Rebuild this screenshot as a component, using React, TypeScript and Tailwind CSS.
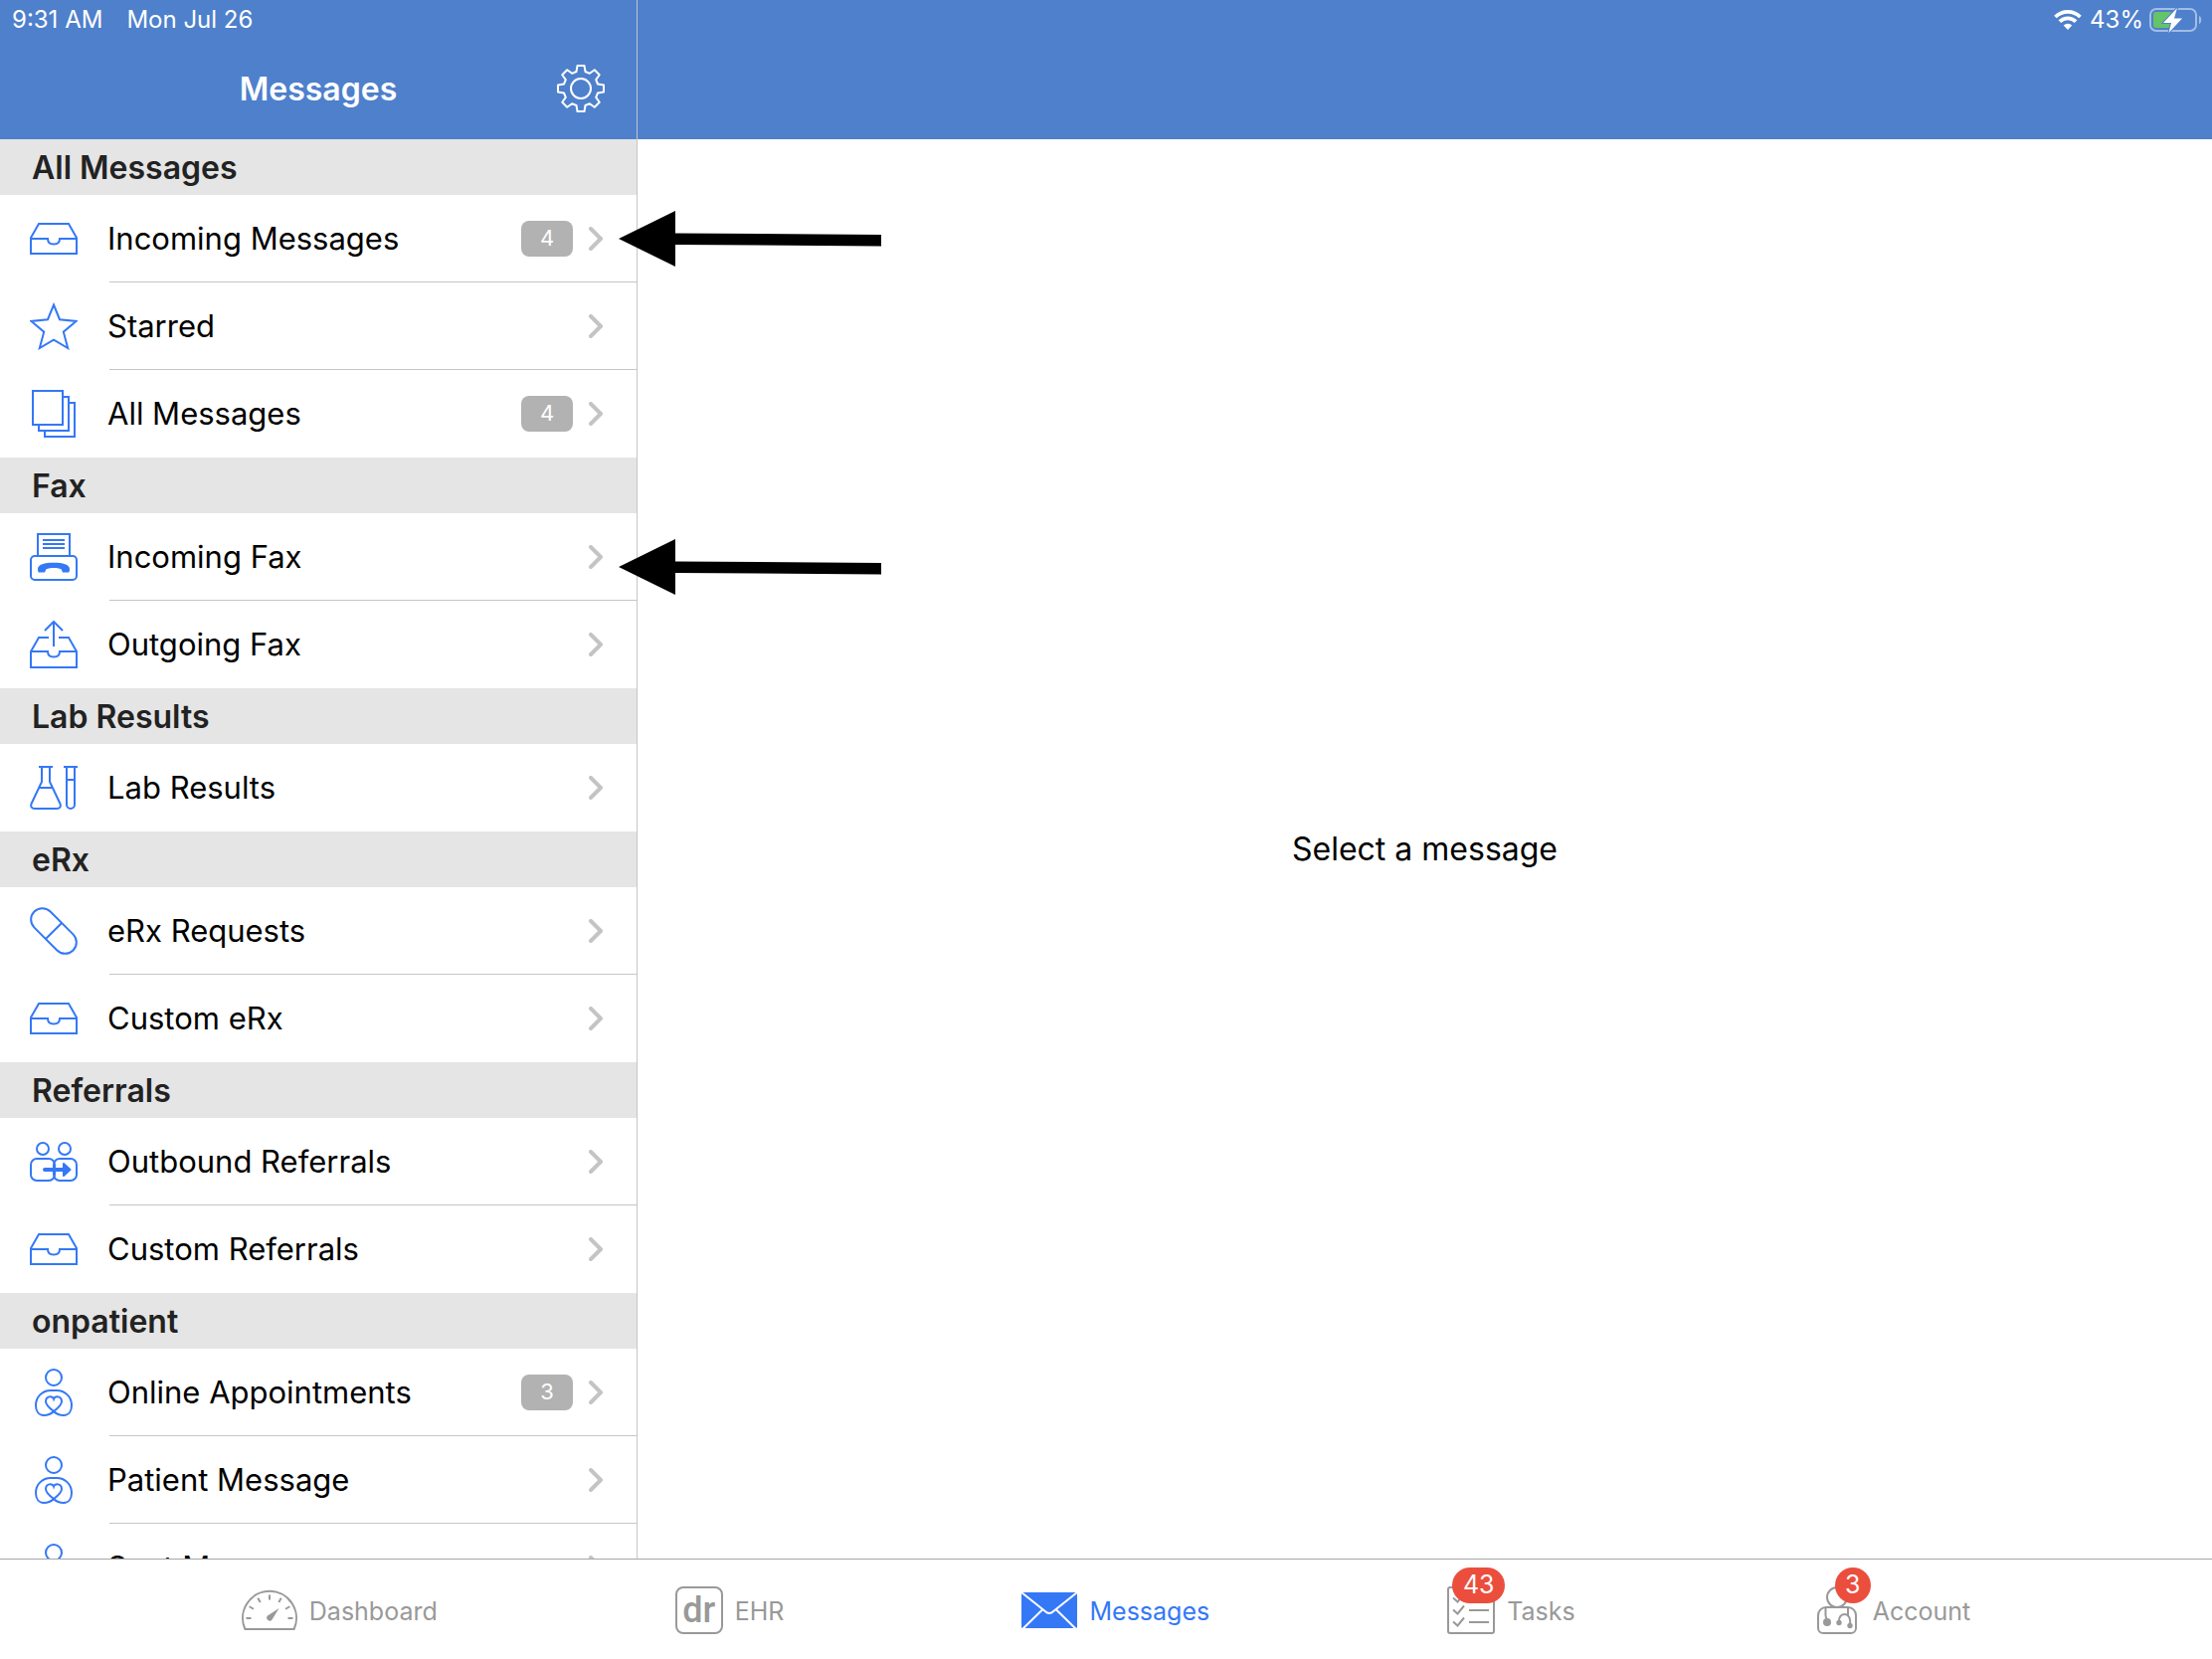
import React from "react";

type IconProps = { className?: string };

type Row = {
  label: string;
  icon: (props: IconProps) => React.ReactElement;
  count?: number;
};

type Section = { title: string; rows: Row[] };

const lineIcon = {
  viewBox: "0 0 48 48",
  fill: "none",
  stroke: "currentColor",
  strokeWidth: 2,
  "aria-hidden": true,
};

function InboxIcon({ className }: IconProps) {
  return (
    <svg {...lineIcon} className={className}>
      <path d="M9 9h30l8 14v16H1V23z" />
      <path d="M1 24h17c0 3.500 2.500 5.500 6 5.500s6-2 6-5.500h17" />
    </svg>
  );
}

function OutboxIcon({ className }: IconProps) {
  return (
    <svg {...lineIcon} className={className}>
      <path d="M19 17H9L1 31v16h46V31l-8-14H29" />
      <path d="M1 31h17c0 3.500 2.500 5.500 6 5.500s6-2 6-5.500h17" />
      <path d="M24 26V1M15 10l9-9 9 9" />
    </svg>
  );
}

function StarIcon({ className }: IconProps) {
  return (
    <svg {...lineIcon} className={className}>
      <path d="M24 2.500l6 14.700 16.500 1.700-12.700 10.800 4.400 16.300L24 37.700 9.800 46l4.400-16.300L1.500 18.900 18 17.200z" />
    </svg>
  );
}

function StackIcon({ className }: IconProps) {
  return (
    <svg {...lineIcon} className={className}>
      <path d="M3 1h30v34H3zM33 7h6v34H9v-6M39 13h6v34H15v-6" />
    </svg>
  );
}

function FaxIcon({ className }: IconProps) {
  return (
    <svg {...lineIcon} className={className}>
      <rect x="1" y="23" width="46" height="24" rx="4" />
      <path d="M8 23V1h32v22M13 7h22M13 11h22M13 15h22" />
      <path
        d="M8 36c0-4.500 7-6.300 16-6.300s16 1.800 16 6.300c0 1.500-.3 3-.8 3.500h-6.200l-1.400-3.300c-4.500-1.600-10.700-1.600-15.200 0L15 39.500H8.800C8.300 39 8 37.500 8 36z"
        fill="currentColor"
        stroke="none"
      />
    </svg>
  );
}

function LabIcon({ className }: IconProps) {
  return (
    <svg {...lineIcon} className={className}>
      <path d="M9 3h14M12 3v15L1.800 39.500C.2 43 1.800 45 5 45h22c3.200 0 4.800-2 3.200-5.500L20 18V3M9.500 24h13" />
      <path d="M34 3h14M37 3v38a4 4 0 0 0 8 0V3M37 16h8" />
    </svg>
  );
}

function PillIcon({ className }: IconProps) {
  return (
    <svg {...lineIcon} className={className}>
      <g transform="rotate(45 24 24)">
        <rect x="-3.600" y="12.600" width="55.200" height="22.800" rx="11.400" />
        <path d="M24 12.600v22.800" />
      </g>
    </svg>
  );
}

function ReferralIcon({ className }: IconProps) {
  return (
    <svg {...lineIcon} className={className}>
      <circle cx="13" cy="11" r="6" />
      <circle cx="35" cy="11" r="6" />
      <rect x="1" y="21" width="24" height="22" rx="6" />
      <rect x="24" y="21" width="23" height="22" rx="6" />
      <path d="M15 32h20" strokeWidth="4" strokeLinecap="round" />
      <path d="M34 26l6.500 6-6.500 6z" fill="currentColor" strokeLinejoin="round" />
    </svg>
  );
}

function PatientIcon({ className }: IconProps) {
  return (
    <svg {...lineIcon} className={className}>
      <circle cx="24" cy="9" r="8" />
      <path d="M24 43c-3 3-6 4-10 4-5 0-8-4-8-10 0-9 7-15 15-15h6c8 0 15 6 15 15 0 6-3 10-8 10-4 0-7-1-10-4-4-3-8-6.500-8-10 0-3 2-4.800 4.500-4.800 1.700 0 3 .8 3.500 2.300.5-1.500 1.800-2.300 3.500-2.300 2.500 0 4.500 1.800 4.500 4.800 0 3.500-4 7-8 10z" />
    </svg>
  );
}

function ChevronIcon({ className }: IconProps) {
  return (
    <svg
      viewBox="0 0 14 24"
      fill="none"
      stroke="currentColor"
      strokeWidth="4"
      strokeLinecap="round"
      strokeLinejoin="round"
      aria-hidden="true"
      className={className}
    >
      <path d="M2 2l10 10L2 22" />
    </svg>
  );
}

function GearIcon({ className }: IconProps) {
  const tooth = [
    [-4.5, -17],
    [-3.5, -23],
    [3.5, -23],
    [4.5, -17],
  ];
  const points = Array.from({ length: 8 }, (_, i) => {
    const a = (i * Math.PI) / 4;
    return tooth
      .map(([x, y]) => {
        const px = 24 + x * Math.cos(a) - y * Math.sin(a);
        const py = 24 + x * Math.sin(a) + y * Math.cos(a);
        return `${px.toFixed(2)},${py.toFixed(2)}`;
      })
      .join(" ");
  }).join(" ");
  return (
    <svg {...lineIcon} strokeLinejoin="round" className={className}>
      <polygon points={points} />
      <circle cx="24" cy="24" r="10" />
    </svg>
  );
}

function WifiIcon({ className }: IconProps) {
  return (
    <svg viewBox="0 0 28 20" fill="none" stroke="currentColor" strokeWidth="3.800" aria-hidden="true" className={className}>
      <path d="M1.500 7a18 18 0 0 1 25 0M5.900 11.600a11.700 11.700 0 0 1 16.200 0" />
      <path d="M14 20l-4.300-4.400a6 6 0 0 1 8.600 0z" fill="currentColor" stroke="none" />
    </svg>
  );
}

function BatteryIcon({ className }: IconProps) {
  return (
    <svg viewBox="0 0 53 26" aria-hidden="true" className={className}>
      <rect x="1" y="2" width="46" height="22" rx="6" fill="none" stroke="#a3bde5" strokeWidth="2" />
      <path d="M50 9c3 1 3 7 0 8z" fill="#a3bde5" />
      <rect x="4" y="5" width="19" height="16" rx="3" fill="#65c466" />
      <path
        d="M28 1L14 16h8l-2.500 10L33 11.500h-8z"
        fill="#fff"
        stroke="#4e80cc"
        strokeWidth="2"
        paintOrder="stroke"
      />
    </svg>
  );
}

function DashboardIcon({ className }: IconProps) {
  return (
    <svg {...lineIcon} viewBox="0 0 56 48" className={className}>
      <path d="M3.400 43a27 27 0 1 1 49.200 0z" />
      {[-90, -60, -30, 0, 30, 60, 90].map((deg) => (
        <path key={deg} d="M28 8.500v5" transform={`rotate(${deg} 28 32)`} />
      ))}
      <path d="M37.500 22l-7 11.500a3 3 0 1 1-4.500-4z" fill="currentColor" stroke="none" />
    </svg>
  );
}

function EnvelopeIcon({ className }: IconProps) {
  return (
    <svg viewBox="0 0 56 48" aria-hidden="true" className={className}>
      <rect y="6" width="56" height="36" rx="1" fill="currentColor" />
      <path
        d="M0 6l23.500 18.800c3 2.900 6 2.900 9 0L56 6M1 43l20.500-20M55 43L34.500 23"
        fill="none"
        stroke="#fff"
        strokeWidth="2"
      />
    </svg>
  );
}

function TasksIcon({ className }: IconProps) {
  return (
    <svg {...lineIcon} className={className}>
      <rect x="1" y="1" width="46" height="46" rx="2" />
      <path d="M6 11.500l4.500 4 6.500-8M6 23.500l4.500 4 6.500-8M6 35.500l4.500 4 6.500-8M22 12h20M22 24h20M22 36h20" />
    </svg>
  );
}

function AccountIcon({ className }: IconProps) {
  return (
    <svg {...lineIcon} className={className}>
      <circle cx="24" cy="11" r="10" />
      <path d="M13 21h22a8 8 0 0 1 8 8v13a5 5 0 0 1-5 5H10a5 5 0 0 1-5-5V29a8 8 0 0 1 8-8z" />
      <path d="M12.500 21v8c0 2 .5 3 1.500 5M35 21v8M26 36c-.5-5 2-8 5.500-8s6.500 3 5.500 11" />
      <circle cx="14" cy="36" r="4" fill="currentColor" stroke="none" />
      <circle cx="26" cy="36.500" r="2.700" fill="currentColor" stroke="none" />
      <circle cx="37" cy="39.500" r="2.700" fill="currentColor" stroke="none" />
    </svg>
  );
}

function Arrow({ className }: IconProps) {
  return (
    <svg viewBox="0 0 266 58" aria-hidden="true" className={className}>
      <path d="M1 28L58 0v22.500l207 1.500v11.500L58 34v22z" />
    </svg>
  );
}

const sections: Section[] = [
  {
    title: "All Messages",
    rows: [
      { label: "Incoming Messages", icon: InboxIcon, count: 4 },
      { label: "Starred", icon: StarIcon },
      { label: "All Messages", icon: StackIcon, count: 4 },
    ],
  },
  {
    title: "Fax",
    rows: [
      { label: "Incoming Fax", icon: FaxIcon },
      { label: "Outgoing Fax", icon: OutboxIcon },
    ],
  },
  { title: "Lab Results", rows: [{ label: "Lab Results", icon: LabIcon }] },
  {
    title: "eRx",
    rows: [
      { label: "eRx Requests", icon: PillIcon },
      { label: "Custom eRx", icon: InboxIcon },
    ],
  },
  {
    title: "Referrals",
    rows: [
      { label: "Outbound Referrals", icon: ReferralIcon },
      { label: "Custom Referrals", icon: InboxIcon },
    ],
  },
  {
    title: "onpatient",
    rows: [
      { label: "Online Appointments", icon: PatientIcon, count: 3 },
      { label: "Patient Message", icon: PatientIcon },
      { label: "Sent Message", icon: PatientIcon },
    ],
  },
];

function MessageRow({ label, icon: Icon, count }: Row) {
  return (
    <li className="group">
      <a href="#" className="flex h-[88px] items-center pl-[30px]">
        <Icon className="h-12 w-12 shrink-0 text-[#3478f6]" />
        <span className="ml-8 flex h-full flex-1 items-center border-b border-[#c6c6c8] pr-[34px] group-last:border-transparent">
          <span className="-ml-0.5 flex-1 pt-0.5 text-[31px] whitespace-nowrap">{label}</span>
          {count && (
            <span className="mr-4 flex h-9 w-[52px] items-center justify-center rounded-lg bg-[#b2b2b2] text-[22px] text-white">
              {count}
            </span>
          )}
          <ChevronIcon className="h-6 w-3.5 text-[#c4c4c6]" />
        </span>
      </a>
    </li>
  );
}

function Sidebar() {
  return (
    <aside className="flex w-[641px] shrink-0 flex-col border-r border-[#c6c6c8]">
      <header className="bg-[#4e80cc] text-white">
        <div className="flex h-10 items-center gap-6 pl-3 text-2xl">
          <span>9:31 AM</span>
          <span>Mon Jul 26</span>
        </div>
        <div className="grid h-[100px] grid-cols-[1fr_auto_1fr] items-center px-8">
          <h1 className="col-start-2 text-[32px] font-semibold">Messages</h1>
          <button type="button" aria-label="Settings" className="mb-0.5 justify-self-end">
            <GearIcon className="h-12 w-12" />
          </button>
        </div>
      </header>
      <nav className="min-h-0 flex-1 overflow-hidden">
        {sections.map((section) => (
          <section key={section.title}>
            <h2 className="flex h-14 items-center bg-[#e5e5e5] pt-px pl-8 text-[32px] font-semibold text-[#222]">
              {section.title}
            </h2>
            <ul>
              {section.rows.map((row) => (
                <MessageRow key={row.label} {...row} />
              ))}
            </ul>
          </section>
        ))}
      </nav>
    </aside>
  );
}

function Detail() {
  return (
    <main className="flex min-w-0 flex-1 flex-col">
      <header className="h-[140px] bg-[#4e80cc] text-white">
        <div className="flex h-10 items-center justify-end pr-2.5 text-2xl">
          <WifiIcon className="h-5 w-7" />
          <span className="ml-2">43%</span>
          <BatteryIcon className="ml-1.5 h-[26px] w-[53px]" />
        </div>
      </header>
      <div className="flex flex-1 items-center justify-center">
        <p className="text-[32px]">Select a message</p>
      </div>
    </main>
  );
}

type TabProps = {
  label: string;
  active?: boolean;
  badge?: number;
  children: React.ReactNode;
};

function Tab({ label, active, badge, children }: TabProps) {
  return (
    <a
      href="#"
      aria-current={active ? "page" : undefined}
      className={`flex items-center gap-3 text-[25px] ${active ? "text-[#3478f6]" : "text-[#999]"}`}
    >
      <span className="relative">
        {children}
        {badge && (
          <span
            className={`absolute -top-[19px] flex h-9 items-center justify-center rounded-full bg-[#eb4e3d] text-white ${
              badge > 9 ? "left-[5px] w-[53px]" : "left-[22px] w-9"
            }`}
          >
            {badge}
          </span>
        )}
      </span>
      <span className="mt-1">{label}</span>
    </a>
  );
}

export default function App() {
  return (
    <div className="flex h-screen flex-col bg-white font-['Inter','Liberation_Sans',sans-serif] text-black">
      <div className="relative flex min-h-0 flex-1">
        <Sidebar />
        <Detail />
        <Arrow className="absolute top-[212px] left-[621px] h-[58px] w-[266px]" />
        <Arrow className="absolute top-[542px] left-[621px] h-[58px] w-[266px]" />
      </div>
      <nav className="flex h-[101px] shrink-0 items-center justify-center gap-[239px] border-t border-[#a8a8a8] pt-0.5">
        <Tab label="Dashboard">
          <DashboardIcon className="h-12 w-14" />
        </Tab>
        <Tab label="EHR">
          <span className="flex h-12 w-12 items-center justify-center rounded-lg border-2 border-current font-['Roboto',sans-serif] text-[36px] leading-none font-medium">
            dr
          </span>
        </Tab>
        <Tab label="Messages" active>
          <EnvelopeIcon className="h-12 w-14" />
        </Tab>
        <Tab label="Tasks" badge={43}>
          <TasksIcon className="h-12 w-12" />
        </Tab>
        <Tab label="Account" badge={3}>
          <AccountIcon className="h-12 w-12" />
        </Tab>
      </nav>
    </div>
  );
}
